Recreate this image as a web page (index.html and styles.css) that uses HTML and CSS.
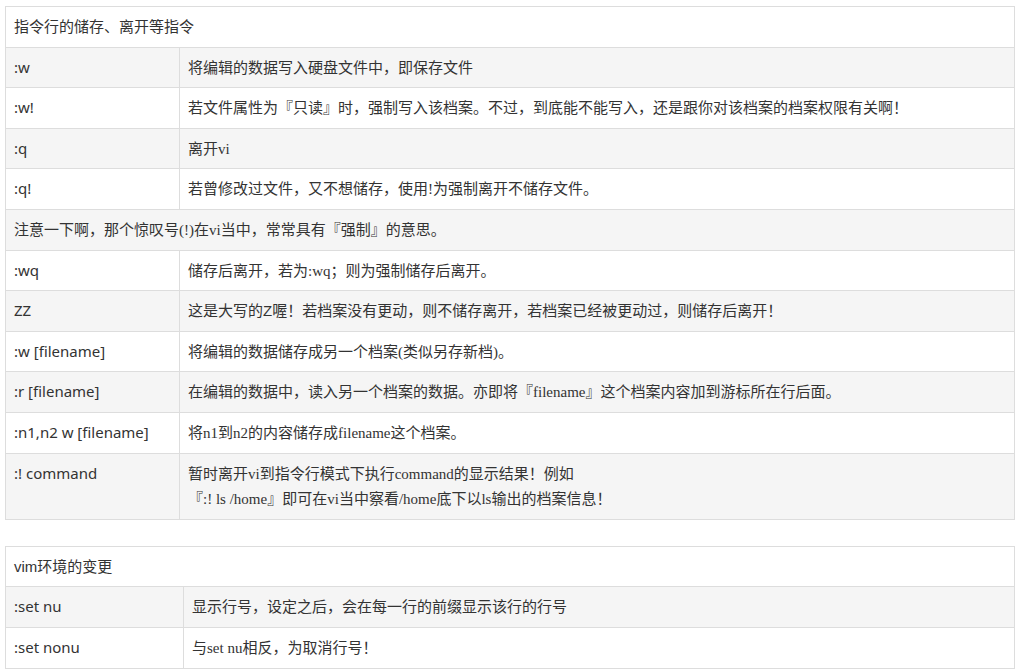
FILE: index.html
```html
<!DOCTYPE html>
<html lang="zh-CN">
<head>
<meta charset="utf-8">
<title>vi 指令</title>
<link rel="stylesheet" href="styles.css">
</head>
<body>
<table class="tbl tbl-a">
  <colgroup><col class="c1"><col></colgroup>
  <tr><td colspan="2">指令行的储存、离开等指令</td></tr>
  <tr class="alt"><td class="cmd">:w</td><td>将编辑的数据写入硬盘文件中，即保存文件</td></tr>
  <tr><td class="cmd">:w!</td><td>若文件属性为『只读』时，强制写入该档案。不过，到底能不能写入，还是跟你对该档案的档案权限有关啊！</td></tr>
  <tr class="alt"><td class="cmd">:q</td><td>离开<span class="s">vi</span></td></tr>
  <tr><td class="cmd">:q!</td><td>若曾修改过文件，又不想储存，使用<span class="s">!</span>为强制离开不储存文件。</td></tr>
  <tr class="alt"><td colspan="2">注意一下啊，那个惊叹号<span class="s">(!)</span>在<span class="s">vi</span>当中，常常具有『强制』的意思。</td></tr>
  <tr><td class="cmd">:wq</td><td>储存后离开，若为<span class="s">:wq</span>；则为强制储存后离开。</td></tr>
  <tr class="alt"><td class="cmd">ZZ</td><td>这是大写的Z喔！若档案没有更动，则不储存离开，若档案已经被更动过，则储存后离开！</td></tr>
  <tr><td class="cmd">:w [filename]</td><td>将编辑的数据储存成另一个档案<span class="s">(</span>类似另存新档<span class="s">)</span>。</td></tr>
  <tr class="alt"><td class="cmd">:r [filename]</td><td>在编辑的数据中，读入另一个档案的数据。亦即将『<span class="s">filename</span>』这个档案内容加到游标所在行后面。</td></tr>
  <tr><td class="cmd">:n1,n2 w [filename]</td><td>将<span class="s">n1</span>到<span class="s">n2</span>的内容储存成<span class="s">filename</span>这个档案。</td></tr>
  <tr class="alt"><td class="cmd">:! command</td><td>暂时离开<span class="s">vi</span>到指令行模式下执行<span class="s">command</span>的显示结果！例如<br>『<span class="s">:! ls /home</span>』即可在<span class="s">vi</span>当中察看<span class="s">/home</span>底下以<span class="s">ls</span>输出的档案信息！</td></tr>
</table>

<table class="tbl tbl-b">
  <colgroup><col class="c1b"><col></colgroup>
  <tr><td colspan="2">vim环境的变更</td></tr>
  <tr class="alt"><td class="cmd">:set nu</td><td>显示行号，设定之后，会在每一行的前缀显示该行的行号</td></tr>
  <tr><td class="cmd">:set nonu</td><td>与<span class="s">set nu</span>相反，为取消行号！</td></tr>
</table>
</body>
</html>
```

FILE: styles.css
```css
html, body {
  margin: 0;
  padding: 0;
  background: #fff;
}
body {
  padding: 6px 5px 0 5px;
  font-family: "Liberation Sans", "Noto Sans CJK SC", sans-serif;
  font-size: 15px;
  color: #333;
}
.tbl {
  width: 1010px;
  border-collapse: collapse;
  table-layout: fixed;
}
.tbl-a {
  margin-bottom: 26px;
}
.tbl td {
  border: 1px solid #ddd;
  padding: 7px 8px;
  line-height: 25.6px;
  vertical-align: top;
  text-align: left;
}
.tbl .alt td {
  background: #f5f5f5;
}
.tbl td.cmd {
  font-family: "Noto Sans", "Liberation Sans", "Noto Sans CJK SC", sans-serif;
  font-size: 15px;
}
.c1 {
  width: 174px;
}
.c1b {
  width: 178px;
}
.s {
  font-family: "Liberation Serif", "Noto Sans CJK SC", serif;
  line-height: 1;
}
```
